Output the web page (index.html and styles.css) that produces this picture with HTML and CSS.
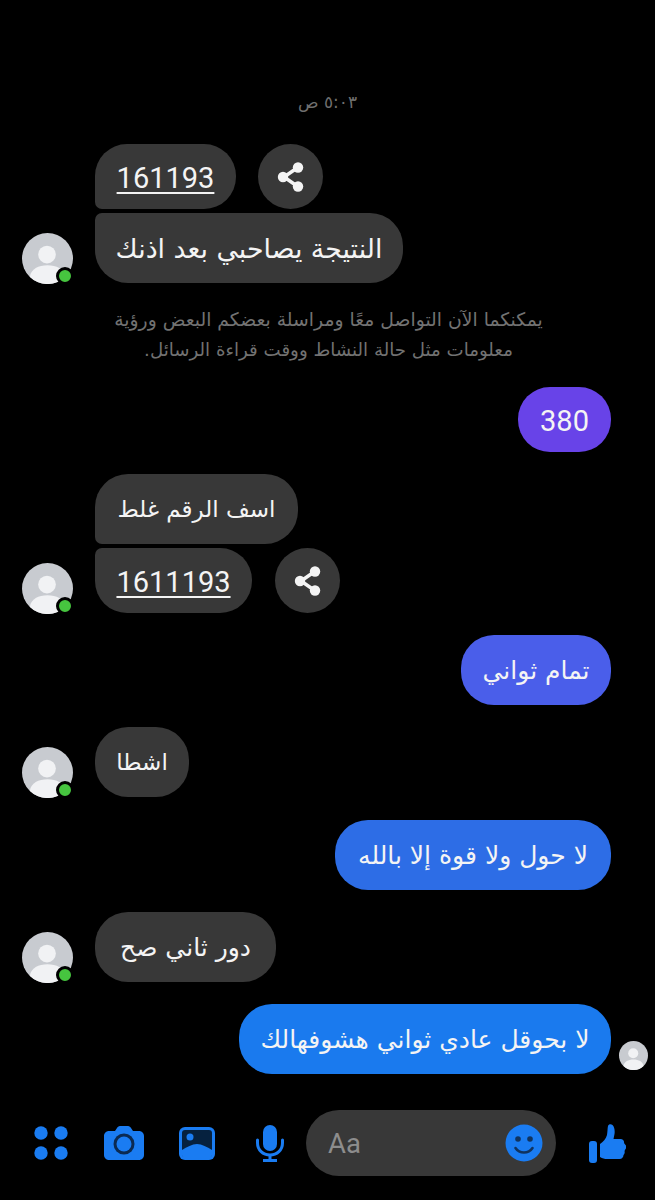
FILE: index.html
```html
<!DOCTYPE html>
<html lang="ar">
<head>
<meta charset="utf-8">
<title>Messenger</title>
<link rel="stylesheet" href="styles.css">
</head>
<body>
<svg class="defs" width="0" height="0" aria-hidden="true">
  <symbol id="person" viewBox="0 0 52 52">
    <circle cx="26" cy="26" r="26" fill="#c8cbd0"/>
    <circle cx="25.500" cy="22" r="9" fill="#f1f2f4"/>
    <path d="M8 44.800c1-8 9-11.800 18-11.800s17 3.800 18 11.800a26 26 0 0 1-36 0z" fill="#f1f2f4"/>
  </symbol>
  <symbol id="share" viewBox="0 0 30 30">
    <path d="M21 6 8 15l13 9" fill="none" stroke="#f4f4f4" stroke-width="3.500"/>
    <circle cx="22" cy="5.500" r="5.200" fill="#f4f4f4"/>
    <circle cx="7" cy="15" r="5.200" fill="#f4f4f4"/>
    <circle cx="22" cy="24.500" r="5.200" fill="#f4f4f4"/>
  </symbol>
</svg>
<main class="screen">
  <div class="thread">
    <p class="time" dir="rtl">٥:٠٣ ص</p>

    <div class="incoming first-group">
      <div class="avatar">
        <svg class="avatar-img"><use href="#person"/></svg>
        <span class="presence"></span>
      </div>
      <div class="stack">
        <div class="with-share">
          <a class="bubble num top-of-group w-141">161193</a>
          <button class="share share-gap-22"><svg class="share-icon"><use href="#share"/></svg></button>
        </div>
        <div class="bubble text-bubble text-large bottom-of-group w-308" dir="rtl">النتيجة يصاحبي بعد اذنك</div>
      </div>
    </div>

    <p class="notice" dir="rtl">يمكنكما الآن التواصل معًا ومراسلة بعضكم البعض ورؤية<br><span class="notice-second">معلومات مثل حالة النشاط ووقت قراءة الرسائل.</span></p>

    <div class="outgoing">
      <div class="bubble short purple w-93">380</div>
    </div>

    <div class="incoming">
      <div class="avatar">
        <svg class="avatar-img"><use href="#person"/></svg>
        <span class="presence"></span>
      </div>
      <div class="stack">
        <div class="bubble text-bubble text-small top-of-group w-203" dir="rtl">اسف الرقم غلط</div>
        <div class="with-share">
          <a class="bubble num bottom-of-group w-157">1611193</a>
          <button class="share share-gap-23"><svg class="share-icon"><use href="#share"/></svg></button>
        </div>
      </div>
    </div>

    <div class="outgoing">
      <div class="bubble text-bubble indigo w-150" dir="rtl">تمام ثواني</div>
    </div>

    <div class="incoming">
      <div class="avatar">
        <svg class="avatar-img"><use href="#person"/></svg>
        <span class="presence"></span>
      </div>
      <div class="bubble text-bubble text-small w-94" dir="rtl">اشطا</div>
    </div>

    <div class="outgoing nudge">
      <div class="bubble text-bubble azure w-276" dir="rtl">لا حول ولا قوة إلا بالله</div>
    </div>

    <div class="incoming">
      <div class="avatar">
        <svg class="avatar-img"><use href="#person"/></svg>
        <span class="presence"></span>
      </div>
      <div class="bubble text-bubble w-181" dir="rtl">دور ثاني صح</div>
    </div>

    <div class="outgoing seen">
      <div class="bubble text-bubble blue w-372" dir="rtl">لا بحوقل عادي ثواني هشوفهالك</div>
      <svg class="seen-avatar"><use href="#person"/></svg>
    </div>
  </div>

  <footer class="composer">
    <div class="tool">
      <svg width="34" height="34" viewBox="0 0 34 34"><g fill="#1a7cf2"><circle cx="7" cy="7" r="6.700"/><circle cx="27" cy="7" r="6.700"/><circle cx="7" cy="27" r="6.700"/><circle cx="27" cy="27" r="6.700"/></g></svg>
    </div>
    <div class="tool">
      <svg width="40" height="34" viewBox="0 0 40 34"><path fill="#1a7cf2" d="M5 5h6l2-3c.6-1 1.500-2 3-2h8c1.500 0 2.400 1 3 2l2 3h6c2.800 0 5 2.200 5 5v19c0 2.800-2.200 5-5 5H5c-2.800 0-5-2.200-5-5V10c0-2.800 2.200-5 5-5z"/><circle cx="20" cy="18" r="10.500" fill="#0b2a52"/><circle cx="20" cy="18" r="7.500" fill="#1a7cf2"/></svg>
    </div>
    <div class="tool">
      <svg width="36" height="33" viewBox="0 0 36 33"><rect width="36" height="33" rx="6" fill="#1a7cf2"/><rect x="3" y="3" width="30" height="27" rx="3" fill="#06213f"/><circle cx="11" cy="10" r="3.500" fill="#1a7cf2"/><path fill="#1a7cf2" d="M3 23c5-3 10-6 15-6s10 3 15 6v5c0 1.500-1 2-2 2H5c-1 0-2-.5-2-2z"/></svg>
    </div>
    <div class="tool">
      <svg width="30" height="37" viewBox="0 0 30 37"><rect x="8" y="0" width="14" height="26" rx="7" fill="#1a7cf2"/><path d="M2.500 15v3c0 7 5.500 12 12.500 12s12.500-5 12.500-12v-3" fill="none" stroke="#1a7cf2" stroke-width="3" stroke-linecap="round"/><path d="M15 30v5M8 35.500h14" fill="none" stroke="#1a7cf2" stroke-width="3"/></svg>
    </div>
    <div class="input-pill">
      <span class="placeholder">Aa</span>
      <svg width="38" height="38" viewBox="0 0 38 38"><circle cx="19" cy="19" r="18.500" fill="#1a7cf2"/><circle cx="13" cy="15" r="2.800" fill="#10335f"/><circle cx="25" cy="15" r="2.800" fill="#10335f"/><path d="M10.500 24c2 3 5 4.500 8.500 4.500s6.500-1.500 8.500-4.500" fill="none" stroke="#10335f" stroke-width="2.600" stroke-linecap="round"/></svg>
    </div>
    <div class="like">
      <svg width="38" height="39" viewBox="0 0 38 39"><rect x="1" y="17" width="8" height="22" rx="3" fill="#1a7cf2"/><path fill="#1a7cf2" d="M12 20c3-2 6-5 7-9 .5-3 .5-7 1-9 .5-2 3-2.500 4.500-1 2 2 2.500 6 2 9l-1 5h7c2.500 0 4 2 3.500 4l1.500 2c1 1 1 3 0 4l-1 2c.5 1.500 0 3-1 4 0 2-1.500 4-4 4H19c-2.500 0-4.500-.5-7-2z"/></svg>
    </div>
  </footer>
</main>
</body>
</html>
```
FILE: styles.css
```css
* { box-sizing: border-box; }
html, body { margin: 0; padding: 0; background: #000; }
body { font-family: "DejaVu Sans", sans-serif; color: #f2f2f2; }
.defs { position: absolute; }

.screen {
  width: 655px;
  height: 1200px;
  overflow: hidden;
  background: #000;
  display: flex;
  flex-direction: column;
  justify-content: space-between;
  padding-top: 92px;
  padding-bottom: 24px;
}

.thread { display: flex; flex-direction: column; gap: 22px; }

.time {
  margin: 0 0 10px;
  height: 20px;
  line-height: 20px;
  text-align: center;
  font-size: 17px;
  color: #6f6f6f;
}

.incoming {
  display: flex;
  align-items: flex-end;
  gap: 22px;
  padding-left: 22px;
}

.outgoing {
  display: flex;
  justify-content: flex-end;
  padding-right: 44px;
}

.outgoing.nudge { margin-top: 1px; }

.outgoing.seen {
  align-items: flex-end;
  gap: 8px;
  padding-right: 7px;
}

.stack { display: flex; flex-direction: column; gap: 4px; align-items: flex-start; }
.with-share { display: flex; align-items: center; }

.avatar {
  position: relative;
  width: 51px;
  height: 51px;
  margin-bottom: -1px;
  flex: none;
}
.avatar-img { display: block; width: 51px; height: 51px; }
.presence {
  position: absolute;
  right: -1px;
  bottom: -1px;
  width: 18px;
  height: 18px;
  border-radius: 50%;
  background: #46c53f;
  border: 3px solid #000;
  box-sizing: border-box;
}

.bubble {
  display: flex;
  align-items: center;
  justify-content: center;
  background: #383838;
  color: #f4f4f4;
  flex: none;
  white-space: nowrap;
}

.text-bubble {
  height: 70px;
  border-radius: 33px;
  font-size: 25px;
}
.text-large { font-size: 26.800px; }
.text-small { font-size: 23px; }

.num, .short {
  height: 65px;
  border-radius: 32px;
  padding-top: 2px;
  font-family: Roboto, sans-serif;
  font-size: 29px;
}

.num { text-decoration: underline; text-decoration-thickness: 2px; text-underline-offset: 4px; }

.top-of-group { border-bottom-left-radius: 7px; }
.bottom-of-group { border-top-left-radius: 7px; }

.purple { background: #6843e8; }
.indigo { background: #4a5eea; }
.azure { background: #2d6de6; }
.blue { background: #1a7aee; }

.w-93 { width: 93px; }
.w-94 { width: 94px; }
.w-141 { width: 141px; }
.w-150 { width: 150px; }
.w-157 { width: 157px; }
.w-181 { width: 181px; }
.w-203 { width: 203px; }
.w-276 { width: 276px; }
.w-308 { width: 308px; }
.w-372 { width: 372px; }

.share {
  width: 65px;
  height: 65px;
  padding: 0;
  border: 0;
  border-radius: 50%;
  background: #383838;
  display: flex;
  align-items: center;
  justify-content: center;
  flex: none;
}
.share-gap-22 { margin-left: 22px; }
.share-gap-23 { margin-left: 23px; }
.share-icon { display: block; width: 30px; height: 30px; }

.notice {
  margin: 0;
  height: 60px;
  padding-left: 2px;
  text-align: center;
  font-size: 18.800px;
  line-height: 30px;
  color: #727272;
}
.notice-second { font-size: 18.200px; }

.seen-avatar { display: block; width: 29px; height: 29px; margin-bottom: 4px; flex: none; }

.composer {
  display: flex;
  align-items: center;
  padding-left: 14px;
}
.tool {
  width: 73px;
  display: flex;
  justify-content: center;
  flex: none;
}
.tool svg, .like svg, .input-pill svg { display: block; }
.input-pill {
  width: 250px;
  height: 66px;
  border-radius: 33px;
  background: #383838;
  display: flex;
  align-items: center;
  justify-content: space-between;
  padding: 0 13px 0 22px;
  flex: none;
}
.placeholder {
  font-family: Roboto, sans-serif;
  font-size: 27.500px;
  color: #8d8d8d;
}
.like { margin-left: 32px; flex: none; }
```
